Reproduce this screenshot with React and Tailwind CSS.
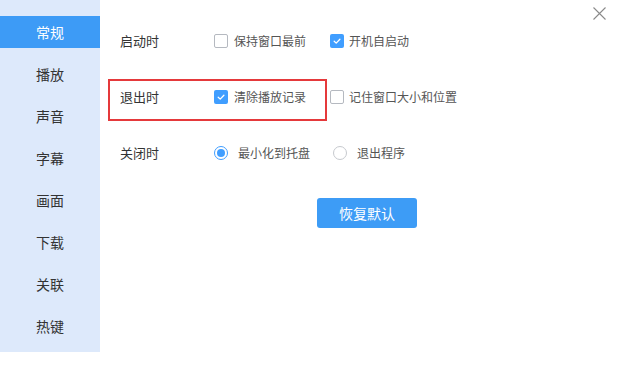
import React from "react";

const font = { fontFamily: '"Microsoft YaHei", "Noto Sans CJK SC", "Noto Sans", sans-serif' };

function Check({ checked }) {
  return checked ? (
    <span className="flex h-[14px] w-[14px] shrink-0 items-center justify-center rounded-[2px] bg-[#409eff]">
      <svg width="10" height="10" viewBox="0 0 10 10">
        <path d="M2.2 5.2 L4.2 7.1 L7.9 3.2" fill="none" stroke="#fff" strokeWidth="1.3" strokeLinecap="round" strokeLinejoin="round" />
      </svg>
    </span>
  ) : (
    <span className="h-[14px] w-[14px] shrink-0 rounded-[2px] border border-[#b5b9c0] bg-white" />
  );
}

function Radio({ checked }) {
  return checked ? (
    <span className="flex h-[14px] w-[14px] shrink-0 items-center justify-center rounded-full border border-[#409eff] bg-white">
      <span className="h-[8px] w-[8px] rounded-full bg-[#409eff]" />
    </span>
  ) : (
    <span className="h-[14px] w-[14px] shrink-0 rounded-full border border-[#c6c9ce] bg-white" />
  );
}

const menu = ["常规", "播放", "声音", "字幕", "画面", "下载", "关联", "热键"];

export default function App() {
  return (
    <div className="relative flex h-[366px] w-[640px] overflow-hidden bg-white text-[#333]" style={font}>
      <div className="flex h-[352px] w-[100px] shrink-0 flex-col gap-[10px] bg-[#dde9fb] pt-[16px]">
        {menu.map((m, i) => (
          <div
            key={m}
            className={`flex h-[32px] items-center justify-center text-[14px] ${i === 0 ? "bg-[#3d9bf6] text-white" : "text-[#333]"}`}
          >
            {m}
          </div>
        ))}
      </div>

      <div className="relative flex flex-1 flex-col pl-[20px] pt-[27px]">
        <div className="flex h-[28px] items-center">
          <div className="w-[94px] text-[13px]">启动时</div>
          <div className="flex w-[116px] items-center gap-[6px] text-[12px] text-[#555]">
            <Check checked={false} />
            <span>保持窗口最前</span>
          </div>
          <div className="flex items-center gap-[5px] text-[12px] text-[#555]">
            <Check checked />
            <span>开机自启动</span>
          </div>
        </div>

        <div className="relative mt-[28px] flex h-[28px] items-center">
          <div className="w-[94px] text-[13px]">退出时</div>
          <div className="flex w-[116px] items-center gap-[6px] text-[12px] text-[#555]">
            <Check checked />
            <span>清除播放记录</span>
          </div>
          <div className="flex items-center gap-[5px] text-[12px] text-[#555]">
            <Check checked={false} />
            <span>记住窗口大小和位置</span>
          </div>
          <div className="pointer-events-none absolute left-[-12px] top-[-4px] h-[42px] w-[219px] border-2 border-[#e5393b]" />
        </div>

        <div className="mt-[28px] flex h-[28px] items-center">
          <div className="w-[94px] text-[13px]">关闭时</div>
          <div className="flex w-[119px] items-center gap-[10px] text-[12px] text-[#555]">
            <Radio checked />
            <span>最小化到托盘</span>
          </div>
          <div className="flex items-center gap-[10px] text-[12px] text-[#555]">
            <Radio checked={false} />
            <span>退出程序</span>
          </div>
        </div>

        <div className="mt-[31px] pl-[197px]">
          <button className="flex h-[30px] w-[100px] items-center justify-center rounded-[3px] bg-[#3d9cf6] text-[14px] text-white">
            恢复默认
          </button>
        </div>
      </div>

      <div className="absolute right-[34px] top-[7px]">
        <svg width="13" height="13" viewBox="0 0 13 13">
          <path d="M0.5 0.5 L12.5 12.5 M12.5 0.5 L0.5 12.5" stroke="#8a8a8a" strokeWidth="1.1" fill="none" />
        </svg>
      </div>
    </div>
  );
}
